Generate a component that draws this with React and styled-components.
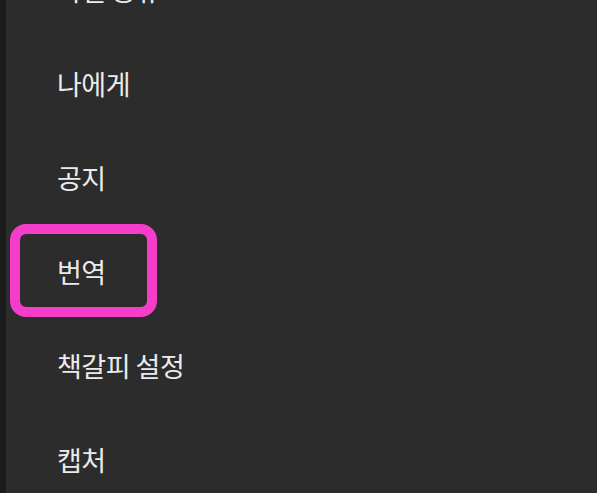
import styled, { createGlobalStyle } from "styled-components";

const GlobalStyle = createGlobalStyle`
  html, body {
    margin: 0;
    padding: 0;
    background: #2c2c2c;
    overflow: hidden;
  }
`;

const Screen = styled.div`
  width: 597px;
  height: 493px;
  display: flex;
  overflow: hidden;
  background: #2c2c2c;
  font-family: "Noto Sans CJK KR", "Noto Sans", sans-serif;
`;

const Edge = styled.div`
  width: 6px;
  flex-shrink: 0;
  background: #1b1b1b;
`;

const Menu = styled.ul`
  list-style: none;
  margin: -58px 0 0;
  padding: 0;
  flex: 1;
  display: flex;
  flex-direction: column;
`;

const Item = styled.li`
  position: relative;
  height: 94px;
  flex-shrink: 0;
  display: flex;
  align-items: center;
  padding-left: 51px;
  color: #ebebeb;
  font-size: 27px;
  letter-spacing: -0.5px;
`;

const Highlight = styled.div`
  position: absolute;
  left: 4px;
  top: 0;
  width: 147px;
  height: 93px;
  box-sizing: border-box;
  border: 10px solid #f43dc9;
  border-radius: 16px;
`;

const items = ["파일 공유", "나에게", "공지", "번역", "책갈피 설정", "캡처"];

const App = () => {
  return (
    <>
      <GlobalStyle />
      <Screen>
        <Edge />
        <Menu>
          {items.map((label) => (
            <Item key={label}>
              {label === "번역" && <Highlight />}
              {label}
            </Item>
          ))}
        </Menu>
      </Screen>
    </>
  );
};

export default App;
